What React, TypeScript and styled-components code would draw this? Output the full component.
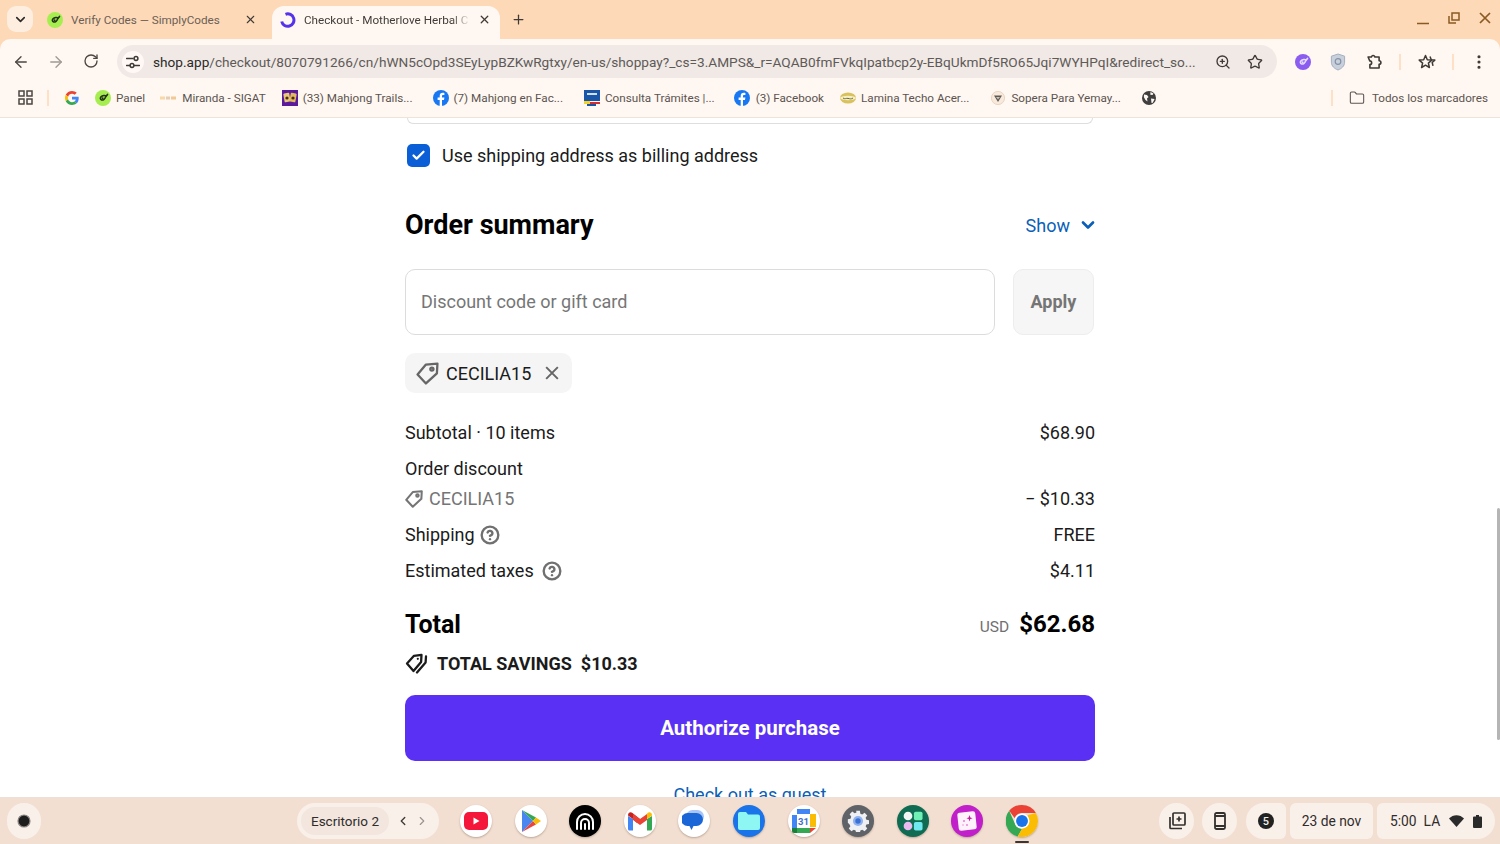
import React from "react";
import styled, { createGlobalStyle } from "styled-components";
import { ArrowLeft, ArrowRight, RotateCw, X, Plus, ChevronDown, ChevronLeft, ChevronRight, Star, Check, Folder, ZoomIn, CircleHelp, MoreVertical } from "lucide-react";

const Global = createGlobalStyle`
  html, body { margin: 0; padding: 0; height: 100%; overflow: hidden; background: #fff; }
  body { font-family: Roboto, "Liberation Sans", sans-serif; }
  * { box-sizing: border-box; }
`;

const Screen = styled.div`
  width: 1500px; height: 844px; display: flex; flex-direction: column; overflow: hidden; background: #fdd9b7;
`;

/* ---------- tab strip ---------- */
const TabStrip = styled.div`
  height: 39px; flex: none; background: #fdd9b7; display: flex; align-items: flex-end; padding-left: 7px; color: #3f3a36;
`;
const TabMenu = styled.div`
  width: 26px; height: 26px; margin-bottom: 7px; border-radius: 9px; background: #fdeee0; display: flex; align-items: center; justify-content: center; color: #2e2a27;
`;
const Tab = styled.div<{ $active?: boolean }>`
  height: 33px; display: flex; align-items: center; flex: none;
  width: ${p => (p.$active ? 228 : 213)}px;
  margin-left: ${p => (p.$active ? 14 : 12)}px;
  padding: ${p => (p.$active ? "0 8px 6px 8px" : "0 0 6px 2px")};
  border-radius: 12px 12px 0 0;
  background: ${p => (p.$active ? "#fff7f1" : "transparent")};
  font-size: 11.7px; color: ${p => (p.$active ? "#413c39" : "#6b5f56")};
`;
const TabTitle = styled.span<{ $active?: boolean }>`
  flex: 1; min-width: 0; margin-left: 8px; white-space: nowrap;
  ${p => p.$active ? "-webkit-mask-image: linear-gradient(90deg, #000 88%, transparent 99%); mask-image: linear-gradient(90deg, #000 88%, transparent 99%);" : ""}
`;
const TabClose = styled.span`
  display: flex; width: 16px; justify-content: center; margin-left: 4px; color: #3f3a36;
`;
const NewTab = styled.div`
  margin-left: 11px; margin-bottom: 11px; width: 16px; height: 16px; display: flex; color: #3f3a36;
`;
const WindowControls = styled.div`
  margin-left: auto; align-self: flex-start; display: flex; align-items: center; gap: 19px; padding: 11px 9px 0 0; color: #8a5a22;
`;

/* ---------- toolbar ---------- */
const ChromeBody = styled.div`
  flex: none; background: #fff7f1; border-radius: 10px 10px 0 0;
`;
const Toolbar = styled.div`
  height: 42px; display: flex; align-items: center; padding: 6px 0 3px 12px; color: #4c4743;
`;
const NavBtn = styled.div<{ $dim?: boolean }>`
  width: 18px; height: 18px; margin-right: 17px; display: flex; justify-content: center; color: ${p => (p.$dim ? "#a09a95" : "#4c4743")};
`;
const Omnibox = styled.div`
  width: 1160px; height: 33px; border-radius: 17px; background: #f0e9e6; display: flex; align-items: center; padding: 0 14px 0 5px; flex: none;
`;
const SiteIcon = styled.div`
  width: 22px; height: 22px; border-radius: 50%; display: flex; align-items: center; justify-content: center; background: #fff8f4; flex: none;
`;
const Url = styled.div`
  margin-left: 9px; flex: none; font-size: 13.65px; color: #5f5a57; white-space: nowrap;
  b { font-weight: 400; color: #2d2a28; }
`;
const OmniActions = styled.div`
  display: flex; align-items: center; gap: 16px; margin-left: auto; color: #3f3a36; flex: none;
`;
const ToolActions = styled.div`
  display: flex; align-items: center; margin-left: 18px; color: #3f3a36; flex: none;
`;
const ToolSlot = styled.span<{ $m?: number }>`
  display: flex; margin-left: ${p => p.$m ?? 19}px;
`;
const ToolSep = styled.div`
  width: 2px; height: 16px; background: #fde0c6; margin-left: 16px;
`;
const Bookmarks = styled.div`
  height: 37px; display: flex; align-items: center; padding: 0 0 3px 18px; font-size: 11.7px; color: #5b5450; border-bottom: 1px solid #ede3dc;
`;
const Bookmark = styled.div<{ $gap?: number; $inner?: number }>`
  display: flex; align-items: center; gap: ${p => p.$inner ?? 5}px; flex: none; margin-left: ${p => p.$gap ?? 14}px; white-space: nowrap;
`;
const BmSep = styled.div<{ $left?: number }>`
  width: 2px; height: 16px; background: #fde0c6; margin-left: ${p => p.$left ?? 0}px; flex: none;
`;

/* ---------- page ---------- */
const Page = styled.div`
  flex: 1; min-height: 0; display: flex; justify-content: center; position: relative; overflow: hidden; background: #fff;
`;
const Column = styled.div`
  width: 690px; flex: none; display: flex; flex-direction: column;
  & > * { flex: none; }
`;
const CutField = styled.div`
  height: 6px; margin: 0 2px; border: 1px solid #dedede; border-top: 0; border-radius: 0 0 10px 10px;
`;
const CheckRow = styled.div`
  margin-top: 19px; padding-left: 2px; height: 24px; display: flex; align-items: center; gap: 12px; font-size: 18px; color: #1b1b1b;
`;
const CheckBox = styled.div`
  width: 23px; height: 23px; border-radius: 5px; background: #0b5fd6; display: flex; align-items: center; justify-content: center; color: #fff;
`;
const SummaryHead = styled.div`
  margin-top: 40px; height: 36px; display: flex; align-items: center; justify-content: space-between;
`;
const Heading = styled.h2`
  margin: 0; font-size: 27px; font-weight: 700; color: #000;
`;
const ShowLink = styled.div`
  display: flex; align-items: center; gap: 8px; margin-right: -3px; color: #0b5fb8; font-size: 18px;
`;
const CodeRow = styled.div`
  margin: 26px 1px 0 0; display: flex; gap: 18px; height: 66px;
`;
const CodeField = styled.div`
  flex: 1; border: 1.5px solid #dcdcdc; border-radius: 10px; display: flex; align-items: center; padding: 0 0 2px 15px; font-size: 18px; color: #767676;
`;
const ApplyBtn = styled.div`
  width: 81px; border: 1px solid #ededed; background: #f6f6f6; border-radius: 10px; display: flex; align-items: center; justify-content: center; padding-bottom: 1px; font-size: 18px; font-weight: 700; color: #757575;
`;
const Chip = styled.div`
  margin-top: 18px; align-self: flex-start; height: 40px; width: 167px; border-radius: 10px; background: #f5f5f5; display: flex; align-items: center; padding-left: 11px; gap: 7px; font-size: 18px; color: #1b1b1b;
`;
const ChipClose = styled.span`
  display: flex; margin-left: 7px;
`;
const Rows = styled.div`
  margin-top: 21px; display: flex; flex-direction: column; font-size: 18px; color: #1b1b1b;
`;
const Row = styled.div<{ $h?: number }>`
  height: ${p => p.$h ?? 36}px; display: flex; align-items: center; justify-content: space-between;
`;
const RowLabel = styled.div<{ $muted?: boolean; $gap?: number }>`
  display: flex; align-items: center; gap: ${p => p.$gap ?? 8}px; color: ${p => (p.$muted ? "#757575" : "#1b1b1b")};
`;
const HelpIcon = styled.span`
  display: flex; color: #707070;
`;
const TotalRow = styled.div`
  margin-top: 23px; height: 36px; display: flex; align-items: center; justify-content: space-between;
`;
const TotalLabel = styled.div`
  font-size: 25px; font-weight: 700; color: #000;
`;
const TotalValue = styled.div`
  display: flex; align-items: baseline; gap: 10px; font-size: 24px; font-weight: 700; color: #000;
  small { font-size: 15.500px; font-weight: 400; color: #707070; }
`;
const Savings = styled.div`
  margin-top: 10px; height: 22px; display: flex; align-items: center; font-size: 18px; font-weight: 700; color: #1b1b1b;
  svg { flex: none; }
`;
const SavingsLabel = styled.span`
  margin-left: 9px;
`;
const AuthorizeBtn = styled.div`
  margin-top: 21px; height: 66px; border-radius: 10px; background: #5a31f4; color: #fff; display: flex; align-items: center; justify-content: center; padding-bottom: 1px; font-size: 20.500px; font-weight: 700;
`;
const GuestLink = styled.div`
  margin-top: 23px; text-align: center; font-size: 18px; color: #0b5fb8; line-height: 22px;
`;
const Scrollbar = styled.div`
  position: absolute; right: 0; top: 390px; width: 3px; height: 232px; background: #b5b5b5; border-radius: 2px;
`;

/* ---------- shelf ---------- */
const Shelf = styled.div`
  height: 47px; flex: none; background: #f2dfd1; display: flex; align-items: center; position: relative; border-top: 1px solid #ece0d7;
`;
const Launcher = styled.div`
  width: 34px; height: 36px; margin-left: 7px; border-radius: 17px; background: #faf0ea; display: flex; align-items: center; justify-content: center; flex: none;
`;
const DeskPill = styled.div`
  margin-left: 256px; width: 142px; height: 36px; border-radius: 18px; background: #faf0ea; display: flex; align-items: center; flex: none; padding-left: 4px; color: #3e3a37;
`;
const DeskName = styled.div`
  width: 88px; height: 28px; border-radius: 14px; background: #f2e6df; font-size: 13.500px; color: #2f2c2a; display: flex; align-items: center; justify-content: center;
`;
const DeskArrows = styled.div`
  display: flex; margin-left: 7px; gap: 5px; align-items: center;
`;
const Apps = styled.div`
  display: flex; align-items: center; gap: 22.600px; margin-left: 21px; flex: none;
`;
const AppIcon = styled.div<{ $bg?: string }>`
  width: 32px; height: 32px; border-radius: 50%; background: ${p => p.$bg || "#fff"}; display: flex; align-items: center; justify-content: center; position: relative; box-shadow: 0 1px 2px rgba(60,40,20,.3); flex: none;
`;
const ActiveDot = styled.div`
  position: absolute; bottom: -6px; left: 9px; width: 14px; height: 2px; background: #3a3633; border-radius: 1px;
`;
const Tray = styled.div`
  margin-left: auto; display: flex; align-items: center; gap: 4px; padding-right: 5px; flex: none; color: #33302e;
`;
const TrayRound = styled.div<{ $m?: number }>`
  width: 35px; height: 36px; border-radius: 50%; background: #faf0ea; display: flex; align-items: center; justify-content: center; margin-left: ${p => p.$m ?? 0}px;
`;
const TrayBadge = styled.div`
  width: 40px; height: 36px; margin-left: 5px; border-radius: 18px 6px 6px 18px; background: #faf0ea; display: flex; align-items: center; justify-content: center;
`;
const BadgeNum = styled.div`
  width: 16px; height: 16px; border-radius: 50%; background: #222; color: #eee; font-size: 11px; font-weight: 500; display: flex; align-items: center; justify-content: center;
`;
const TrayDate = styled.div`
  width: 83px; height: 36px; border-radius: 6px; background: #faf0ea; display: flex; align-items: center; justify-content: center; font-size: 13.800px; color: #2f2c2a;
`;
const TrayStatus = styled.div`
  width: 118px; height: 36px; border-radius: 6px 18px 18px 6px; background: #faf0ea; display: flex; align-items: center; padding-left: 13px; font-size: 13.800px; color: #2f2c2a;
  span + span { margin-left: 7px; }
  svg { margin-left: 9px; }
`;

/* ---------- drawn icons ---------- */
const SimplyCodes = ({ s = 16, bg = "#a6ee4f", fg = "#24321a" }: { s?: number; bg?: string; fg?: string }) => (
  <svg width={s} height={s} viewBox="0 0 16 16" style={{ flex: "none" }}>
    <circle cx="8" cy="8" r="8" fill={bg} />
    <path d="M11 6.200c-.8-1.200-3.600-.8-5 .7-1 1.100-.8 2.700.6 3 1.600.3 3.600-1 4-3l1.900-2.500" fill="none" stroke={fg} strokeWidth="1.600" strokeLinecap="round" />
    <circle cx="7.600" cy="8.300" r="1" fill={fg} />
  </svg>
);
const ShopArc = () => (
  <svg width="16" height="16" viewBox="0 0 16 16" style={{ flex: "none" }}>
    <path d="M5.500 2.300a6.200 6.200 0 1 1-3.800 7.200" fill="none" stroke="#5433eb" strokeWidth="3" />
    <circle cx="8" cy="8" r="1.500" fill="#fff7f1" />
  </svg>
);
const GLogo = () => (
  <svg width="14" height="14" viewBox="0 0 48 48" style={{ flex: "none" }}>
    <path fill="#EA4335" d="M24 9.500c3.500 0 6.700 1.200 9.200 3.600l6.900-6.900C35.900 2.400 30.500 0 24 0 14.600 0 6.500 5.400 2.600 13.200l8 6.200C12.500 13.700 17.800 9.500 24 9.500z" />
    <path fill="#4285F4" d="M46.900 24.500c0-1.600-.1-3.100-.4-4.500H24v9h12.900c-.6 3-2.200 5.500-4.700 7.200l7.700 6c4.500-4.200 7-10.300 7-17.700z" />
    <path fill="#FBBC05" d="M10.500 28.600c-.5-1.400-.8-3-.8-4.600s.3-3.200.8-4.600l-8-6.200C.9 16.500 0 20.100 0 24s.9 7.500 2.600 10.800l7.900-6.200z" />
    <path fill="#34A853" d="M24 48c6.500 0 11.900-2.100 15.900-5.800l-7.700-6c-2.200 1.400-4.900 2.300-8.200 2.300-6.200 0-11.500-4.200-13.400-9.900l-8 6.200C6.500 42.600 14.600 48 24 48z" />
  </svg>
);
const Fb = () => (
  <svg width="16" height="16" viewBox="0 0 16 16" style={{ flex: "none" }}>
    <circle cx="8" cy="8" r="8" fill="#1877f2" />
    <path d="M9 16V10h2l.4-2.400H9V6.200c0-.8.3-1.200 1.200-1.200h1.200V2.900c-.4-.1-1-.1-1.700-.1-1.900 0-3 1.100-3 3.100v1.700H4.600V10h2.100v6z" fill="#fff" />
  </svg>
);
const Sigat = () => (
  <svg width="16" height="10" viewBox="0 0 16 10" style={{ flex: "none" }}>
    <rect x="0" y="3.500" width="5" height="3" fill="#f8d7a8" />
    <rect x="6" y="3.500" width="4" height="3" fill="#e6cdb8" />
    <rect x="11" y="3.500" width="5" height="3" fill="#f2c894" />
  </svg>
);
const Mahjong = () => (
  <svg width="16" height="16" viewBox="0 0 16 16" style={{ flex: "none" }}>
    <rect width="16" height="16" fill="#5a1a9c" />
    <rect x="2" y="3" width="6" height="9" rx="1" fill="#e9c878" transform="rotate(-10 5 8)" />
    <rect x="8" y="3" width="6" height="9" rx="1" fill="#e3b95e" transform="rotate(10 11 8)" />
    <circle cx="5" cy="8" r="1.600" fill="#4a2d13" />
    <circle cx="11" cy="8" r="1.600" fill="#4a2d13" />
  </svg>
);
const Intt = () => (
  <svg width="16" height="16" viewBox="0 0 16 16" style={{ flex: "none" }}>
    <rect width="16" height="11" fill="#1a56a8" />
    <rect x="0" y="11" width="6" height="3" fill="#f4d22a" />
    <rect x="6" y="12" width="10" height="2" fill="#d92b2b" />
    <rect x="3" y="14" width="9" height="2" fill="#1a56a8" />
    <rect x="3" y="3" width="10" height="2" fill="#cfe0f5" />
  </svg>
);
const Mercado = () => (
  <svg width="16" height="12" viewBox="0 0 16 12" style={{ flex: "none" }}>
    <ellipse cx="8" cy="6" rx="8" ry="5.600" fill="#d9c25e" />
    <ellipse cx="8" cy="6" rx="8" ry="2.200" fill="#f7efc4" />
    <path d="M3 6c2 1.500 3 0 5 .4s3 1 5-.4" stroke="#6a6a3a" strokeWidth="1" fill="none" />
  </svg>
);
const Sopera = () => (
  <svg width="14" height="14" viewBox="0 0 14 14" style={{ flex: "none" }}>
    <circle cx="7" cy="7" r="6.600" fill="#f7e9dc" stroke="#e7cdb6" strokeWidth=".8" />
    <path d="M3 4.500h8L7 11z" fill="#5f5a54" />
    <path d="M5 6h4L7 8.600z" fill="#c9c3bc" />
  </svg>
);
const Globe = () => (
  <svg width="14" height="14" viewBox="0 0 14 14" style={{ flex: "none" }}>
    <circle cx="7" cy="7" r="7" fill="#3f3f3f" />
    <path d="M2 3.500l3 .6 1.500 2-1.500 1.400.5 3-2-1.400-1.600-2.800zM8.500 1l3 1.600-1 1.500-2.200-.3zM9 7.500l3.600.4-1.800 3.800-1.300.2z" fill="#fff7f1" />
  </svg>
);
const TuneIcon = () => (
  <svg width="14" height="14" viewBox="0 0 14 14" fill="none" stroke="#3f3a36" strokeWidth="1.500">
    <path d="M.5 3.500h6.500M.5 10.500h3M8.500 10.500h5" strokeLinecap="round" />
    <circle cx="10" cy="3.500" r="1.900" />
    <circle cx="6" cy="10.500" r="1.900" />
  </svg>
);
const ShieldExt = () => (
  <svg width="16" height="18" viewBox="0 0 16 18">
    <path d="M8 1l6.600 2.200v6c0 3.800-3 6.400-6.600 7.800C4.400 15.600 1.400 13 1.400 9.200v-6z" fill="#c8d0dc" stroke="#a4afc0" strokeWidth="1" />
    <circle cx="8" cy="8.500" r="2.800" fill="none" stroke="#8491a6" strokeWidth="1.200" />
  </svg>
);
const PuzzleExt = () => (
  <svg width="18" height="18" viewBox="0 0 18 18" fill="none" stroke="#3f3a36" strokeWidth="1.600" strokeLinejoin="round">
    <path d="M3.100 4h3.300a1.800 1.800 0 0 1 3.400-.4l.1.400h4.200v3.700a1.800 1.800 0 0 1 0 3.600v3.700H4.900v-3.500a1.800 1.800 0 0 0-.1-3.600l-.1-.1z" />
  </svg>
);
const StarList = () => (
  <svg width="18" height="18" viewBox="0 0 18 18" fill="none" stroke="#3f3a36" strokeWidth="1.500" strokeLinejoin="round">
    <path d="M7.500 2.500l1.800 4.200 4.500.4-3.400 3 1 4.400-3.900-2.300-3.900 2.300 1-4.400-3.400-3 4.500-.4z" />
    <path d="M12 3.500l1.300 3.200 3.500.4-2.600 2.400.8 3.400" />
  </svg>
);
const MinIcon = () => (
  <svg width="12" height="14" viewBox="0 0 12 14"><path d="M0 12.500h12" stroke="#8a5a22" strokeWidth="1.500" /></svg>
);
const MaxIcon = () => (
  <svg width="12" height="12" viewBox="0 0 12 12" fill="none" stroke="#8a5a22" strokeWidth="1.500">
    <rect x="4" y="1" width="7" height="7" />
    <path d="M1 4v7h7" />
  </svg>
);
const CloseIcon = ({ s = 12, c = "#8a5a22", w = 1.700 }: { s?: number; c?: string; w?: number }) => (
  <svg width={s} height={s} viewBox="0 0 12 12" fill="none" stroke={c} strokeWidth={w}><path d="M1 1l10 10M11 1L1 11" /></svg>
);
const GridIcon = () => (
  <svg width="15" height="15" viewBox="0 0 15 15" fill="none" stroke="#4c4743" strokeWidth="1.500" style={{ flex: "none" }}>
    <rect x="1" y="1" width="5" height="5" />
    <rect x="9" y="1" width="5" height="5" />
    <rect x="1" y="9" width="5" height="5" />
    <rect x="9" y="9" width="5" height="5" />
  </svg>
);
const SavingsTag = () => (
  <svg width="23" height="21" viewBox="0 0 23 21" fill="none" stroke="#1b1b1b" strokeWidth="2.300" strokeLinejoin="round" strokeLinecap="round">
    <path d="M2 10.500L9 2.800l7.500-1 -.4 7.200L8.500 18z" />
    <circle cx="12.800" cy="5.800" r="1.100" fill="#1b1b1b" stroke="none" />
    <path d="M21 3.500l-.4 6L12 19.500" />
  </svg>
);
const TagIcon = ({ s, c, w = 2.200 }: { s: number; c: string; w?: number }) => (
  <svg width={s} height={s} viewBox="0 0 22 22" fill="none" stroke={c} strokeWidth={w} strokeLinejoin="round" style={{ flex: "none" }}>
    <path d="M1.500 12L9.500 2.500 20.500 1.500 20 10.800 9.500 20.500z" />
    <circle cx="15.200" cy="6.800" r="1.500" />
  </svg>
);

const YouTube = () => (
  <svg width="24" height="18" viewBox="0 0 24 18"><rect width="24" height="18" rx="5" fill="#f5163b" /><path d="M9.500 5.500l6 3.500-6 3.500z" fill="#fff" /></svg>
);
const Play = () => (
  <svg width="22" height="24" viewBox="0 0 22 24">
    <path d="M2 1l11 11L2 23z" fill="#4a86f0" />
    <path d="M2 1l14 7.500L13 12z" fill="#36a853" />
    <path d="M2 23l14-7.500L13 12z" fill="#e8453c" />
    <path d="M16 8.500l5 3.500-5 3.500-3-3.500z" fill="#f9bc05" />
  </svg>
);
const Podcast = () => (
  <svg width="22" height="20" viewBox="0 0 22 20" fill="none" stroke="#fff" strokeWidth="2" strokeLinecap="round">
    <path d="M3 18V11a8 8 0 0 1 16 0v7" />
    <path d="M7 18v-6a4 4 0 0 1 8 0v6" />
    <path d="M11 13v5" />
  </svg>
);
const Gmail = () => (
  <svg width="26" height="20" viewBox="0 0 26 20">
    <path d="M1 5v13a1.500 1.500 0 0 0 1.500 1.500H6V8z" fill="#4285f4" />
    <path d="M25 5v13a1.500 1.500 0 0 1-1.500 1.500H20V8z" fill="#34a853" />
    <path d="M6 8L1 4.500C1 1.500 3.500.5 5.500 2L13 8l-3 4z" fill="#c5221f" />
    <path d="M6 3l7 5 7-5v6l-7 5-7-5z" fill="#ea4335" />
    <path d="M20 8l5-3.500c0-3-2.500-4-4.500-2.500L20 3z" fill="#fbbc04" />
  </svg>
);
const Messages = () => (
  <svg width="24" height="22" viewBox="0 0 24 22">
    <rect x="4" y="0" width="18" height="13" rx="6.500" fill="#a8c4f7" />
    <path d="M5.500 3h9a6.500 6.500 0 0 1 0 13h-3l-2 4-2-4h-2A6.500 6.500 0 0 1 5.500 3z" fill="#1a66d6" />
  </svg>
);
const Files = () => (
  <svg width="22" height="18" viewBox="0 0 22 18"><path d="M2 0h6l2 2.500h10a2 2 0 0 1 2 2V16a2 2 0 0 1-2 2H2a2 2 0 0 1-2-2V2a2 2 0 0 1 2-2z" fill="#8ef7f4" /></svg>
);
const Calendar = () => (
  <svg width="24" height="24" viewBox="0 0 24 24">
    <rect x="1" y="1" width="22" height="22" rx="2" fill="#fff" />
    <path d="M5 0h13v5H5z" fill="#4285f4" />
    <path d="M0 6h5v13H0z" fill="#4285f4" />
    <path d="M18 5h6v13h-6z" fill="#fbbc04" />
    <path d="M5 19h13v5H5z" fill="#34a853" />
    <path d="M0 19h5v5H2a2 2 0 0 1-2-2z" fill="#188038" />
    <path d="M18 19h6l-6 5z" fill="#ea4335" />
    <text x="11.500" y="16" fontSize="9.500" fontWeight="700" textAnchor="middle" fontFamily="Roboto, sans-serif" fill="#3f72c9">31</text>
  </svg>
);
const Settings = () => (
  <svg width="22" height="22" viewBox="0 0 26 26">
    <path d="M10.800 1h4.400l.6 3.300 2.200.9 2.800-1.900 3.100 3.100-1.900 2.800.9 2.200 3.100.6v4.400l-3.100.6-.9 2.200 1.900 2.800-3.100 3.100-2.800-1.900-2.200.9-.6 3.300h-4.400l-.6-3.300-2.200-.9-2.800 1.900-3.100-3.100 1.900-2.800-.9-2.200L1 15.200v-4.400l3.100-.6.9-2.200L3.100 5l3.100-3.100L9 3.800l2.200-.9z" fill="#eef0f4" />
    <circle cx="13" cy="13" r="6" fill="#8fb2ee" />
    <circle cx="13" cy="13" r="3.200" fill="#3a6fd8" />
  </svg>
);
const Tiles = () => (
  <svg width="20" height="20" viewBox="0 0 22 22">
    <circle cx="5.500" cy="5.500" r="4.800" fill="#f2f7f5" />
    <rect x="12" y="0.700" width="9.500" height="9.500" rx="2" fill="#6ff0b5" />
    <circle cx="5.500" cy="16.500" r="4.800" fill="#e9b9ef" />
    <rect x="12" y="12" width="9.500" height="9.500" rx="2" fill="#6fe9ef" />
  </svg>
);
const Gallery = () => (
  <svg width="22" height="22" viewBox="0 0 22 22">
    <rect x="2" y="2" width="18" height="18" rx="2.500" fill="#fff2fb" transform="rotate(-6 11 11)" />
    <path d="M13.500 5l.8 2.400 2.300.8-2.300.8-.8 2.400-.8-2.400-2.300-.8 2.300-.8z" fill="#c4199e" />
    <circle cx="8" cy="11" r="1" fill="#e77ad0" />
    <circle cx="11" cy="15" r=".9" fill="#e77ad0" />
    <circle cx="7" cy="15" r=".7" fill="#e77ad0" />
  </svg>
);
const Chrome = () => (
  <svg width="34" height="34" viewBox="0 0 34 34">
    <path d="M17 0a17 17 0 0 1 14.700 8.500H17a8.500 8.500 0 0 0-7.900 5.300L3.400 6.200A17 17 0 0 1 17 0z" fill="#ea4335" />
    <path d="M3.400 6.200l7.300 16.400A8.500 8.500 0 0 0 17 25.500l-4.600 7.900A17 17 0 0 1 3.400 6.200z" fill="#34a853" />
    <path d="M31.700 8.500A17 17 0 0 1 12.400 33.400l7.500-13A8.500 8.500 0 0 0 22.900 11l8.800-2.500z" fill="#fbbc04" />
    <circle cx="17" cy="17" r="8" fill="#fff" />
    <circle cx="17" cy="17" r="6.300" fill="#1a73e8" />
  </svg>
);
const Screenshot = () => (
  <svg width="18" height="18" viewBox="0 0 18 18" fill="none" stroke="#33302e" strokeWidth="1.700" strokeLinejoin="round">
    <rect x="5" y="1" width="12" height="12" rx="1" />
    <path d="M8.500 7h5M11 4.500v5" />
    <path d="M2 5v10.500a1 1 0 0 0 1 1h11" />
  </svg>
);
const Phone = () => (
  <svg width="12" height="18" viewBox="0 0 12 18" fill="none" stroke="#33302e" strokeWidth="1.800">
    <rect x="1" y="1" width="10" height="16" rx="1.500" />
    <path d="M1 4h10M1 14h10" />
  </svg>
);
const Wifi = () => (
  <svg width="15" height="12" viewBox="0 0 15 12"><path d="M0 3.500C4 -1 11 -1 15 3.500L7.500 12z" fill="#2b2b2b" /></svg>
);
const Battery = () => (
  <svg width="9" height="13" viewBox="0 0 9 13"><path d="M3 0h3v1.500h2a1 1 0 0 1 1 1V12a1 1 0 0 1-1 1H1a1 1 0 0 1-1-1V2.500a1 1 0 0 1 1-1h2z" fill="#2b2b2b" /></svg>
);
const DotRec = () => (
  <svg width="14" height="14" viewBox="0 0 14 14"><circle cx="7" cy="7" r="6" fill="#1d1d1d" stroke="#8a8583" strokeWidth="1.200" /></svg>
);

export default function App() {
  return (
    <Screen>
      <Global />
      <TabStrip>
        <TabMenu><ChevronDown size={15} strokeWidth={2.600} /></TabMenu>
        <Tab>
          <SimplyCodes />
          <TabTitle>Verify Codes — SimplyCodes</TabTitle>
          <TabClose><X size={13} strokeWidth={2} /></TabClose>
        </Tab>
        <Tab $active>
          <ShopArc />
          <TabTitle $active>Checkout - Motherlove Herbal C</TabTitle>
          <TabClose><X size={13} strokeWidth={2.400} /></TabClose>
        </Tab>
        <NewTab><Plus size={15} strokeWidth={2} /></NewTab>
        <WindowControls>
          <MinIcon />
          <MaxIcon />
          <CloseIcon />
        </WindowControls>
      </TabStrip>

      <ChromeBody>
        <Toolbar>
          <NavBtn><ArrowLeft size={18} strokeWidth={1.800} /></NavBtn>
          <NavBtn $dim><ArrowRight size={18} strokeWidth={1.800} /></NavBtn>
          <NavBtn><RotateCw size={16} strokeWidth={2} /></NavBtn>
          <Omnibox>
            <SiteIcon><TuneIcon /></SiteIcon>
            <Url><b>shop.app</b>/checkout/8070791266/cn/hWN5cOpd3SEyLypBZKwRgtxy/en-us/shoppay?_cs=3.AMPS&amp;_r=AQAB0fmFVkqIpatbcp2y-EBqUkmDf5RO65Jqi7WYHPqI&amp;redirect_so...</Url>
            <OmniActions>
              <ZoomIn size={16} strokeWidth={2} />
              <Star size={16} strokeWidth={2} />
            </OmniActions>
          </Omnibox>
          <ToolActions>
            <SimplyCodes s={16} bg="#8a5cf0" fg="#e6dcff" />
            <ToolSlot><ShieldExt /></ToolSlot>
            <ToolSlot><PuzzleExt /></ToolSlot>
            <ToolSep />
            <ToolSlot $m={17}><StarList /></ToolSlot>
            <ToolSep />
            <ToolSlot $m={16}><MoreVertical size={18} strokeWidth={2.200} /></ToolSlot>
          </ToolActions>
        </Toolbar>
        <Bookmarks>
          <GridIcon />
          <BmSep $left={14} />
          <Bookmark $gap={16}><GLogo /></Bookmark>
          <Bookmark $gap={16}><SimplyCodes /><span>Panel</span></Bookmark>
          <Bookmark $gap={15} $inner={6}><Sigat /><span>Miranda - SIGAT</span></Bookmark>
          <Bookmark $gap={16}><Mahjong /><span>(33) Mahjong Trails...</span></Bookmark>
          <Bookmark $gap={20}><Fb /><span>(7) Mahjong en Fac...</span></Bookmark>
          <Bookmark $gap={21}><Intt /><span>Consulta Trámites |...</span></Bookmark>
          <Bookmark $gap={19} $inner={6}><Fb /><span>(3) Facebook</span></Bookmark>
          <Bookmark $gap={16}><Mercado /><span>Lamina Techo Acer...</span></Bookmark>
          <Bookmark $gap={22} $inner={6}><Sopera /><span>Sopera Para Yemay...</span></Bookmark>
          <Bookmark $gap={21}><Globe /></Bookmark>
          <BmSep $left={175} />
          <Bookmark $gap={16} $inner={7}><Folder size={16} strokeWidth={1.600} /><span>Todos los marcadores</span></Bookmark>
        </Bookmarks>
      </ChromeBody>

      <Page>
        <Column>
          <CutField />
          <CheckRow>
            <CheckBox><Check size={15} strokeWidth={3.600} /></CheckBox>
            <span>Use shipping address as billing address</span>
          </CheckRow>
          <SummaryHead>
            <Heading>Order summary</Heading>
            <ShowLink>Show <ChevronDown size={20} strokeWidth={3.200} /></ShowLink>
          </SummaryHead>
          <CodeRow>
            <CodeField>Discount code or gift card</CodeField>
            <ApplyBtn>Apply</ApplyBtn>
          </CodeRow>
          <Chip>
            <TagIcon s={23} c="#666" />
            <span>CECILIA15</span>
            <ChipClose><CloseIcon s={14} c="#666" w={1.700} /></ChipClose>
          </Chip>
          <Rows>
            <Row><RowLabel>Subtotal · 10 items</RowLabel><span>$68.90</span></Row>
            <Row><RowLabel>Order discount</RowLabel></Row>
            <Row $h={25}><RowLabel $muted $gap={6}><TagIcon s={18} c="#757575" w={2.500} />CECILIA15</RowLabel><span>− $10.33</span></Row>
            <Row $h={47}><RowLabel $gap={5}>Shipping <HelpIcon><CircleHelp size={20} strokeWidth={2.800} /></HelpIcon></RowLabel><span>FREE</span></Row>
            <Row $h={25}><RowLabel $gap={8}>Estimated taxes <HelpIcon><CircleHelp size={20} strokeWidth={2.800} /></HelpIcon></RowLabel><span>$4.11</span></Row>
          </Rows>
          <TotalRow>
            <TotalLabel>Total</TotalLabel>
            <TotalValue><small>USD</small>$62.68</TotalValue>
          </TotalRow>
          <Savings>
            <SavingsTag />
            <SavingsLabel>TOTAL SAVINGS</SavingsLabel>
            <SavingsLabel>$10.33</SavingsLabel>
          </Savings>
          <AuthorizeBtn>Authorize purchase</AuthorizeBtn>
          <GuestLink>Check out as guest</GuestLink>
        </Column>
        <Scrollbar />
      </Page>

      <Shelf>
        <Launcher><DotRec /></Launcher>
        <DeskPill>
          <DeskName>Escritorio 2</DeskName>
          <DeskArrows>
            <ChevronLeft size={14} strokeWidth={2.400} />
            <ChevronRight size={14} strokeWidth={2} color="#9a9490" />
          </DeskArrows>
        </DeskPill>
        <Apps>
          <AppIcon><YouTube /></AppIcon>
          <AppIcon><Play /></AppIcon>
          <AppIcon $bg="#000"><Podcast /></AppIcon>
          <AppIcon><Gmail /></AppIcon>
          <AppIcon><Messages /></AppIcon>
          <AppIcon $bg="#1a73e8"><Files /></AppIcon>
          <AppIcon><Calendar /></AppIcon>
          <AppIcon $bg="#5f6368"><Settings /></AppIcon>
          <AppIcon $bg="#0f6b52"><Tiles /></AppIcon>
          <AppIcon $bg="#c01fc9"><Gallery /></AppIcon>
          <AppIcon $bg="transparent"><Chrome /><ActiveDot /></AppIcon>
        </Apps>
        <Tray>
          <TrayRound><Screenshot /></TrayRound>
          <TrayRound $m={4}><Phone /></TrayRound>
          <TrayBadge><BadgeNum>5</BadgeNum></TrayBadge>
          <TrayDate>23 de nov</TrayDate>
          <TrayStatus>
            <span>5:00</span><span>LA</span>
            <Wifi /><Battery />
          </TrayStatus>
        </Tray>
      </Shelf>
    </Screen>
  );
}
